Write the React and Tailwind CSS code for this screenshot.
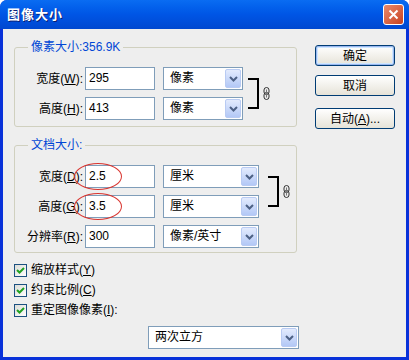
import React from "react";

const Chevron = () => (
  <svg width="9" height="6" viewBox="0 0 9 6">
    <path d="M1 1 L4.5 4.5 L8 1" fill="none" stroke="#4d6185" strokeWidth="2" />
  </svg>
);

const Chain = () => (
  <svg width="7" height="13" viewBox="0 0 7 13">
    <rect x="1" y="0.5" width="5" height="7" rx="2.5" fill="none" stroke="#333" strokeWidth="1" />
    <rect x="1" y="5.5" width="5" height="7" rx="2.5" fill="none" stroke="#333" strokeWidth="1" />
    <line x1="3.5" y1="2.5" x2="3.5" y2="10.5" stroke="#777" strokeWidth="1" />
  </svg>
);

const Select = ({ value, width }) => (
  <div className={`flex h-[23px] ${width} border border-[#7f9db9] bg-white`}>
    <span className="flex-1 pl-[6px] text-[12px] leading-[21px] text-black">{value}</span>
    <span className="m-px flex w-[16px] items-center justify-center rounded-[2px] border border-[#b9cbf3] bg-gradient-to-b from-[#e3ebfd] to-[#b3c8f6]">
      <Chevron />
    </span>
  </div>
);

const Input = ({ value, circled }) => (
  <div className="relative ml-[2px] h-[23px] w-[70px] border border-[#7f9db9] bg-white pl-[3px] text-[12px] leading-[21px] text-black">
    {value}
    {circled && (
      <div className="absolute -left-[12px] -top-[3px] h-[27px] w-[48px] rounded-[50%] border border-[#d9342f]" />
    )}
  </div>
);

const Label = ({ text, hot, tail = ":" }) => (
  <span className="w-[68px] text-right text-[12px] text-black">
    {text}(<span className="underline">{hot}</span>){tail}
  </span>
);

const Row = ({ label, hot, value, unit, unitWidth, circled }) => (
  <div className="flex h-[23px] items-center">
    <Label text={label} hot={hot} />
    <Input value={value} circled={circled} />
    <div className="ml-[8px]">
      <Select value={unit} width={unitWidth} />
    </div>
  </div>
);

const Group = ({ title, children }) => (
  <div className="relative rounded-[3px] border border-[#d0d0bf]">
    <span className="absolute -top-[8px] left-[13px] bg-[#eeeeee] px-[3px] text-[12px] leading-[15px] text-[#0046d5]">
      {title}
    </span>
    {children}
  </div>
);

const Bracket = ({ gap }) => (
  <div className={`flex items-start ${gap}`}>
    <div className="mt-[11px] h-[31px] w-[11px] border-y-2 border-r-2 border-black" />
    <div className="ml-[4px] mt-[20px]">
      <Chain />
    </div>
  </div>
);

const Check = ({ text, hot, tail = "" }) => (
  <div className="flex h-[20px] items-center">
    <span className="flex h-[13px] w-[13px] items-center justify-center border border-[#1c5180] bg-gradient-to-br from-[#dcdcd7] to-white">
      <svg width="9" height="9" viewBox="0 0 9 9">
        <path d="M1 4 L3.5 6.5 L8 2" fill="none" stroke="#21a121" strokeWidth="2" />
      </svg>
    </span>
    <span className="ml-[4px] text-[12px] text-black">
      {text}(<span className="underline">{hot}</span>){tail}
    </span>
  </div>
);

const Button = ({ children, primary }) => (
  <div
    className={`flex h-[21px] w-[80px] items-center justify-center rounded-[3px] border border-[#003c74] bg-gradient-to-b from-white to-[#e6e3d8] text-[12px] text-black ${
      primary ? "shadow-[inset_0_0_0_1px_#9ab7ef,inset_0_0_0_2px_#cee7ff]" : ""
    }`}
  >
    {children}
  </div>
);

export default function App() {
  return (
    <div className="flex h-[360px] w-[409px] flex-col overflow-hidden rounded-t-[7px] bg-[#0831d9] font-['Liberation_Sans','Noto_Sans_CJK_SC',sans-serif]">
      <div className="flex h-[29px] items-center justify-between bg-gradient-to-b from-[#0a6cf2] via-[#0055e5] to-[#0048d0] pl-[7px] pr-[5px]">
        <span className="text-[13px] font-bold tracking-[1px] text-white [text-shadow:1px_1px_0_#0a1e74]">
          图像大小
        </span>
        <div className="flex h-[21px] w-[21px] items-center justify-center rounded-[3px] border border-white bg-gradient-to-br from-[#e9896b] to-[#c8401c]">
          <svg width="11" height="11" viewBox="0 0 11 11">
            <path d="M1.5 1.5 L9.5 9.5 M9.5 1.5 L1.5 9.5" stroke="white" strokeWidth="2" />
          </svg>
        </div>
      </div>

      <div className="mx-[3px] mb-[3px] flex flex-1 items-start bg-[#eeeeee] pl-[11px]">
        <div className="flex w-[283px] flex-col pt-[18px]">
          <Group title="像素大小:356.9K">
            <div className="flex pb-[6px] pt-[19px]">
              <div className="flex flex-col gap-[7px]">
                <Row label="宽度" hot="W" value="295" unit="像素" unitWidth="w-[80px]" />
                <Row label="高度" hot="H" value="413" unit="像素" unitWidth="w-[80px]" />
              </div>
              <Bracket gap="ml-[5px]" />
            </div>
          </Group>

          <div className="mt-[18px]">
            <Group title="文档大小:">
              <div className="flex pb-[4px] pt-[19px]">
                <div className="flex flex-col gap-[7px]">
                  <Row label="宽度" hot="D" value="2.5" unit="厘米" unitWidth="w-[96px]" circled />
                  <Row label="高度" hot="G" value="3.5" unit="厘米" unitWidth="w-[96px]" circled />
                  <Row label="分辨率" hot="R" value="300" unit="像素/英寸" unitWidth="w-[96px]" />
                </div>
                <Bracket gap="ml-[9px]" />
              </div>
            </Group>
          </div>

          <div className="mt-[7px] flex flex-col">
            <Check text="缩放样式" hot="Y" />
            <Check text="约束比例" hot="C" />
            <Check text="重定图像像素" hot="I" tail=":" />
          </div>

          <div className="ml-[134px] mt-[6px]">
            <Select value="两次立方" width="w-[151px]" />
          </div>
        </div>

        <div className="ml-[18px] flex flex-col pt-[16px]">
          <Button primary>确定</Button>
          <div className="mt-[9px]">
            <Button>取消</Button>
          </div>
          <div className="mt-[12px]">
            <Button>
              <span>
                自动(<span className="underline">A</span>)...
              </span>
            </Button>
          </div>
        </div>
      </div>
    </div>
  );
}
